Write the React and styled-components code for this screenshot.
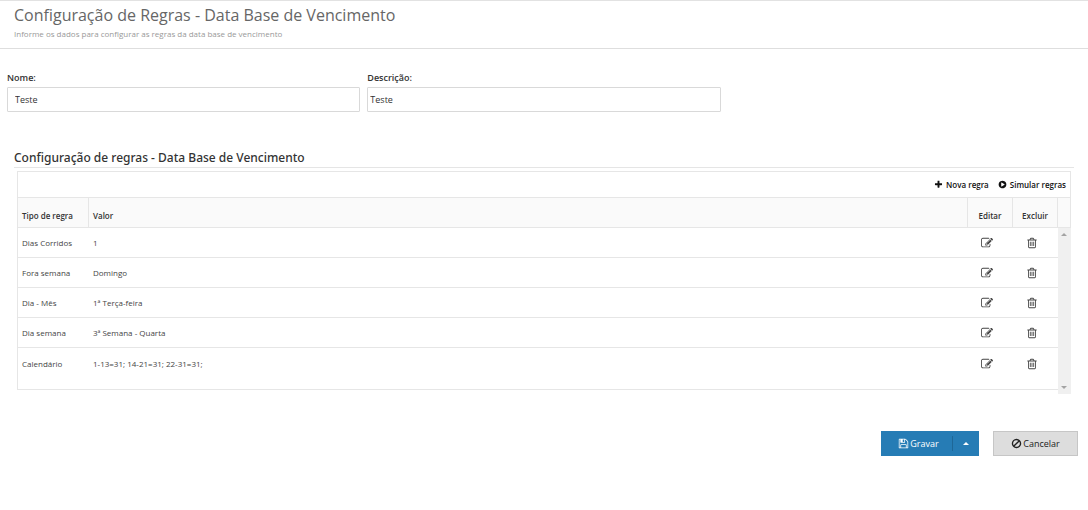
import styled, { createGlobalStyle } from "styled-components";

const icons = {
    plus: "M1600 736v192q0 40-28 68t-68 28h-416v416q0 40-28 68t-68 28h-192q-40 0-68-28t-28-68v-416h-416q-40 0-68-28t-28-68v-192q0-40 28-68t68-28h416v-416q0-40 28-68t68-28h192q40 0 68 28t28 68v416h416q40 0 68 28t28 68z",
    play: "M896 128q209 0 385.5 103t279.5 279.5 103 385.5-103 385.5-279.5 279.5-385.5 103-385.5-103-279.5-279.5-103-385.5 103-385.5 279.5-279.5 385.5-103zm384 823q32-18 32-55t-32-55l-544-320q-31-19-64-1-32 19-32 56v640q0 37 32 56 16 8 32 8 17 0 32-9z",
    edit: "M888 1184l116-116-152-152-116 116v56h96v96h56zm440-720q-16-16-33 1l-350 350q-17 17-1 33t33-1l350-350q17-17 1-33zm80 594v190q0 119-84.5 203.5t-203.5 84.5h-832q-119 0-203.5-84.5t-84.5-203.5v-832q0-119 84.5-203.5t203.5-84.5h832q63 0 117 25 15 7 18 23 3 17-9 29l-49 49q-14 14-32 8-23-6-45-6h-832q-66 0-113 47t-47 113v832q0 66 47 113t113 47h832q66 0 113-47t47-113v-126q0-13 9-22l64-64q15-15 35-7t20 29zm-96-738l288 288-672 672h-288v-288zm444 132l-92 92-288-288 92-92q28-28 68-28t68 28l152 152q28 28 28 68t-28 68z",
    trash: "M704 736v576q0 14-9 23t-23 9h-64q-14 0-23-9t-9-23v-576q0-14 9-23t23-9h64q14 0 23 9t9 23zm256 0v576q0 14-9 23t-23 9h-64q-14 0-23-9t-9-23v-576q0-14 9-23t23-9h64q14 0 23 9t9 23zm256 0v576q0 14-9 23t-23 9h-64q-14 0-23-9t-9-23v-576q0-14 9-23t23-9h64q14 0 23 9t9 23zm128 724v-948h-896v948q0 22 7 40.5t14.5 27 10.5 8.5h832q3 0 10.5-8.5t14.5-27 7-40.5zm-672-1076h448l-48-117q-7-9-17-11h-317q-10 2-17 11zm928 32v64q0 14-9 23t-23 9h-96v948q0 83-47 143.5t-113 60.5h-832q-66 0-113-58.5t-47-141.5v-952h-96q-14 0-23-9t-9-23v-64q0-14 9-23t23-9h309l70-167q15-37 54-63t79-26h320q40 0 79 26t54 63l70 167h309q14 0 23 9t9 23z",
    save: "M512 1536h768v-384h-768v384zm896 0h128v-896q0-14-10-38.5t-20-34.5l-281-281q-10-10-34-20t-39-10v416q0 40-28 68t-68 28h-576q-40 0-68-28t-28-68v-416h-128v1280h128v-416q0-40 28-68t68-28h832q40 0 68 28t28 68v416zm-384-928v-320q0-13-9.5-22.5t-22.5-9.5h-192q-13 0-22.5 9.5t-9.5 22.5v320q0 13 9.5 22.5t22.5 9.5h192q13 0 22.5-9.5t9.5-22.5zm640 32v928q0 40-28 68t-68 28h-1344q-40 0-68-28t-28-68v-1344q0-40 28-68t68-28h928q40 0 88 20t76 48l280 280q28 28 48 76t20 88z",
    ban: "M1440 893q0-161-87-295l-754 753q137 89 297 89 111 0 211.5-43.5t173.5-116.5 116-174.5 43-212.5zm-999 299l755-754q-135-91-300-91-148 0-273 73t-198 199-73 274q0 162 89 299zm1223-299q0 157-61 300t-163.5 246-245 164-298.5 61-298.5-61-245-164-163.5-246-61-300 61-299.5 163.5-245.5 245-164 298.5-61 298.5 61 245 164 163.5 245.5 61 299.5z",
};

const Icon = ({ name, size }) => (
    <svg width={size} height={size} viewBox="0 0 1792 1792" fill="currentColor" aria-hidden="true">
        <path d={icons[name]} />
    </svg>
);

const rules = [
    { type: "Dias Corridos", value: "1" },
    { type: "Fora semana", value: "Domingo" },
    { type: "Dia - Mês", value: "1ª Terça-feira" },
    { type: "Dia semana", value: "3ª Semana - Quarta" },
    { type: "Calendário", value: "1-13=31; 14-21=31; 22-31=31;" },
];

const App = () => {
    return (
        <>
            <GlobalStyle />
            <Header>
                <Title>Configuração de Regras - Data Base de Vencimento</Title>
                <Subtitle>Informe os dados para configurar as regras da data base de vencimento</Subtitle>
            </Header>
            <main>
                <Fields>
                    <Field>
                        <Label htmlFor="nome">Nome:</Label>
                        <Input type="text" id="nome" name="nome" defaultValue="Teste" $indent="7px" />
                    </Field>
                    <Field>
                        <Label htmlFor="descricao">Descrição:</Label>
                        <Input type="text" id="descricao" name="descricao" defaultValue="Teste" $indent="2px" />
                    </Field>
                </Fields>
                <Section>
                    <SectionTitle>Configuração de regras - Data Base de Vencimento</SectionTitle>
                    <Grid>
                        <Toolbar>
                            <ToolButton type="button"><Icon name="plus" size={9} />Nova regra</ToolButton>
                            <ToolButton type="button"><Icon name="play" size={9} />Simular regras</ToolButton>
                        </Toolbar>
                        <GridContent>
                            <Table>
                                <thead>
                                    <tr>
                                        <Th $width="71px">Tipo de regra</Th>
                                        <Th>Valor</Th>
                                        <Th $width="45px" $center>Editar</Th>
                                        <Th $width="45px" $center>Excluir</Th>
                                    </tr>
                                </thead>
                                <tbody>
                                    {rules.map((rule) => (
                                        <Row key={rule.type}>
                                            <Td>{rule.type}</Td>
                                            <Td>{rule.value}</Td>
                                            <Td>
                                                <IconButton type="button" aria-label="Editar"><Icon name="edit" size={12} /></IconButton>
                                            </Td>
                                            <Td>
                                                <IconButton type="button" aria-label="Excluir"><Icon name="trash" size={12} /></IconButton>
                                            </Td>
                                        </Row>
                                    ))}
                                </tbody>
                            </Table>
                            <ScrollColumn>
                                <ScrollHeader />
                                <ScrollTrack>
                                    <Arrow $up />
                                    <Arrow />
                                </ScrollTrack>
                            </ScrollColumn>
                        </GridContent>
                    </Grid>
                </Section>
                <Actions>
                    <SplitButton>
                        <SaveButton type="button"><Icon name="save" size={11} />Gravar</SaveButton>
                        <Divider />
                        <MoreButton type="button" aria-label="Mais opções"><Caret /></MoreButton>
                    </SplitButton>
                    <CancelButton type="button"><Icon name="ban" size={11} />Cancelar</CancelButton>
                </Actions>
            </main>
        </>
    );
};

const GlobalStyle = createGlobalStyle`
    * {
        box-sizing: border-box;
    }
    body {
        margin: 0;
        background: #fff;
        color: #333;
        font-family: "Open Sans", "Noto Sans", sans-serif;
        font-size: 9px;
    }
    button, input {
        font-family: inherit;
    }
    svg {
        display: block;
        flex: none;
    }
`;

const Header = styled.header`
    padding: 4px 14px 7px;
    border-top: 1px solid #e2e2e2;
    border-bottom: 1px solid #dedede;
`;

const Title = styled.h1`
    margin: 0;
    font-size: 16px;
    font-weight: 400;
    line-height: 20px;
    color: #666;
`;

const Subtitle = styled.p`
    margin: 0;
    padding-top: 2px;
    font-size: 8px;
    line-height: 14px;
    color: #999;
`;

const Fields = styled.div`
    display: grid;
    grid-template-columns: repeat(3, 1fr);
    gap: 7px;
    padding: 22px 7px 0;
`;

const Field = styled.div`
    display: flex;
    flex-direction: column;
`;

const Label = styled.label`
    padding-bottom: 2px;
    font-size: 9px;
    font-weight: 600;
    line-height: 14px;
`;

const Input = styled.input`
    width: 100%;
    height: 25px;
    padding: 0 ${(props) => props.$indent};
    border: 1px solid #d9d9d9;
    border-radius: 1px;
    outline: none;
    font-size: 9px;
    color: #333;
`;

const Section = styled.section`
    padding: 37px 14px 0;
`;

const SectionTitle = styled.h2`
    margin: 0;
    border-bottom: 1px solid #e5e5e5;
    font-family: "Noto Sans", sans-serif;
    font-size: 12px;
    font-weight: 500;
    line-height: 18px;
    color: #333;
`;

const Grid = styled.div`
    margin: 3px 3px 0;
    border: 1px solid #e6e6e6;
`;

const Toolbar = styled.div`
    display: flex;
    justify-content: flex-end;
    gap: 9px;
    padding: 0 4px;
    border-bottom: 1px solid #e6e6e6;
`;

const ToolButton = styled.button`
    display: flex;
    align-items: center;
    gap: 3px;
    height: 25px;
    padding: 0;
    border: none;
    background: none;
    font-size: 8px;
    font-weight: 600;
    color: #111;
    cursor: pointer;
`;

const GridContent = styled.div`
    display: flex;
`;

const Table = styled.table`
    flex: 1;
    table-layout: fixed;
    border-collapse: separate;
    border-spacing: 0;
`;

const Th = styled.th`
    width: ${(props) => props.$width || "auto"};
    height: 30px;
    padding: 6px ${(props) => (props.$center ? "0" : "4px")} 0;
    border-right: 1px solid #e6e6e6;
    border-bottom: 1px solid #e6e6e6;
    background: #fafafa;
    font-size: 8px;
    font-weight: 600;
    text-align: ${(props) => (props.$center ? "center" : "left")};
    white-space: nowrap;
`;

const Td = styled.td`
    height: 30px;
    padding: 0 4px;
    border-bottom: 1px solid #e6e6e6;
    font-size: 8px;
    color: #444;
    white-space: nowrap;
`;

const Row = styled.tr`
    &:last-child ${Td} {
        height: 41px;
        padding-bottom: 10px;
        border-bottom: none;
    }
`;

const IconButton = styled.button`
    display: block;
    margin: 0 auto;
    padding: 0 8px 0 0;
    border: none;
    background: none;
    color: #444;
    cursor: pointer;
`;

const ScrollColumn = styled.div`
    display: flex;
    flex-direction: column;
    width: 13px;
    margin: 0 -1px -5px 0;
`;

const ScrollHeader = styled.div`
    height: 30px;
    border-right: 1px solid #e6e6e6;
    border-bottom: 1px solid #e6e6e6;
    background: #fafafa;
`;

const ScrollTrack = styled.div`
    display: flex;
    flex: 1;
    flex-direction: column;
    align-items: center;
    justify-content: space-between;
    padding: 5px 1px 5px 0;
    background: #f0f0f0;
`;

const Arrow = styled.span`
    border: 3px solid transparent;
    border-top: ${(props) => (props.$up ? "none" : "3px solid #a3a3a3")};
    border-bottom: ${(props) => (props.$up ? "3px solid #a3a3a3" : "none")};
`;

const Actions = styled.div`
    display: flex;
    justify-content: flex-end;
    gap: 14px;
    padding: 41px 10px 0;
`;

const SplitButton = styled.div`
    display: flex;
    background: #267cb5;
`;

const Button = styled.button`
    display: flex;
    align-items: center;
    justify-content: center;
    gap: 1px;
    height: 25px;
    padding: 0;
    border: 1px solid transparent;
    font-size: 9px;
    cursor: pointer;
`;

const SaveButton = styled(Button)`
    width: 71px;
    padding-left: 4px;
    background: none;
    color: #fff;
`;

const Divider = styled.span`
    width: 1px;
    margin: 5px 0;
    background: #1e6797;
`;

const MoreButton = styled(Button)`
    width: 26px;
    background: none;
`;

const CancelButton = styled(Button)`
    width: 85px;
    border-color: #c6c6c6;
    background: #ddd;
    color: #222;
`;

const Caret = styled.span`
    border: 3px solid transparent;
    border-top: none;
    border-bottom: 3px solid #fff;
`;

export default App;
